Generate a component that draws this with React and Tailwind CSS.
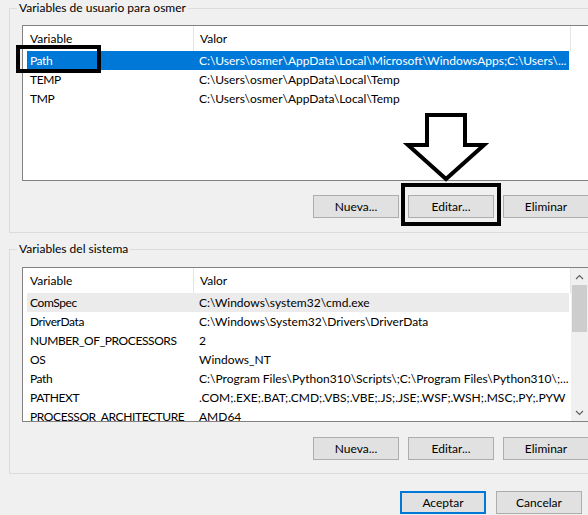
import React from 'react';

const userVars = [
  { name: 'Path', value: 'C:\\Users\\osmer\\AppData\\Local\\Microsoft\\WindowsApps;C:\\Users\\...', selected: true },
  { name: 'TEMP', value: 'C:\\Users\\osmer\\AppData\\Local\\Temp' },
  { name: 'TMP', value: 'C:\\Users\\osmer\\AppData\\Local\\Temp' },
];

const systemVars = [
  { name: 'ComSpec', value: 'C:\\Windows\\system32\\cmd.exe', inactive: true },
  { name: 'DriverData', value: 'C:\\Windows\\System32\\Drivers\\DriverData' },
  { name: 'NUMBER_OF_PROCESSORS', value: '2' },
  { name: 'OS', value: 'Windows_NT' },
  { name: 'Path', value: 'C:\\Program Files\\Python310\\Scripts\\;C:\\Program Files\\Python310\\;...' },
  { name: 'PATHEXT', value: '.COM;.EXE;.BAT;.CMD;.VBS;.VBE;.JS;.JSE;.WSF;.WSH;.MSC;.PY;.PYW' },
  { name: 'PROCESSOR_ARCHITECTURE', value: 'AMD64' },
];

function GroupBox({ title, className, children }) {
  return (
    <div className={`relative w-[592px] border border-[#dcdcdc] pl-[12px] ${className}`}>
      <div className="absolute -top-[9px] left-[7px] bg-[#f0f0f0] px-[2px] leading-[16px] text-black">{title}</div>
      {children}
    </div>
  );
}

function Row({ v }) {
  const bg = v.selected ? 'bg-[#0078d7] text-white' : v.inactive ? 'bg-[#ebebeb] text-black' : 'text-black';
  return (
    <div className={`ml-[4px] flex h-[19px] w-[542px] items-center whitespace-nowrap ${bg}`}>
      <div className="w-[166px] overflow-hidden pl-[3px] tracking-[-0.4px]">{v.name}</div>
      <div className="w-[376px] overflow-hidden pl-[6px]">{v.value}</div>
    </div>
  );
}

function ListView({ rows, height, scroll }) {
  return (
    <div className={`flex w-[567px] border border-[#828282] bg-white ${height}`}>
      <div className="flex-1 overflow-hidden">
        <div className="flex h-[25px] items-center text-black">
          <div className="h-full w-[170px] pl-[7px] leading-[25px]">Variable</div>
          <div className="h-full w-[1px] bg-[#e5e5e5]" />
          <div className="h-full w-[376px] pl-[6px] leading-[25px]">Valor</div>
          <div className="h-full w-[1px] bg-[#e5e5e5]" />
        </div>
        {rows.map((v, i) => (
          <Row key={i} v={v} />
        ))}
      </div>
      {scroll && (
        <div className="flex w-[17px] flex-col items-center bg-[#f0f0f0]">
          <div className="flex h-[17px] items-center justify-center">
            <svg width="9" height="6" viewBox="0 0 9 6">
              <polyline points="1,5 4.5,1.5 8,5" fill="none" stroke="#606060" strokeWidth="1.2" />
            </svg>
          </div>
          <div className="h-[47px] w-[15px] bg-[#cdcdcd]" />
          <div className="flex-1" />
          <div className="flex h-[17px] items-center justify-center">
            <svg width="9" height="6" viewBox="0 0 9 6">
              <polyline points="1,1 4.5,4.5 8,1" fill="none" stroke="#606060" strokeWidth="1.2" />
            </svg>
          </div>
        </div>
      )}
    </div>
  );
}

function Btn({ children, primary }) {
  return (
    <button
      className={`flex h-[23px] w-[86px] items-center justify-center bg-[#e1e1e1] text-black ${
        primary ? 'border-2 border-[#0078d7]' : 'border border-[#adadad]'
      }`}
    >
      {children}
    </button>
  );
}

export default function App() {
  return (
    <div
      className="relative h-[515px] w-[588px] overflow-hidden bg-[#f0f0f0] text-[12px]"
      style={{ fontFamily: 'Lato, "Noto Sans", sans-serif' }}
    >
      <div className="w-[640px] pl-[9px] pt-[8px]">
        <GroupBox title="Variables de usuario para osmer" className="pb-[14px] pt-[16px]">
          <ListView rows={userVars} height="h-[156px]" />
          <div className="mt-[14px] flex w-[567px] justify-end gap-[9px]">
            <Btn>Nueva...</Btn>
            <Btn>Editar...</Btn>
            <Btn>Eliminar</Btn>
          </div>
        </GroupBox>

        <GroupBox title="Variables del sistema" className="mt-[16px] pb-[13px] pt-[17px]">
          <ListView rows={systemVars} height="h-[155px]" scroll />
          <div className="mt-[15px] flex w-[567px] justify-end gap-[9px]">
            <Btn>Nueva...</Btn>
            <Btn>Editar...</Btn>
            <Btn>Eliminar</Btn>
          </div>
        </GroupBox>

        <div className="mt-[17px] flex w-[573px] justify-end gap-[10px]">
          <Btn primary>Aceptar</Btn>
          <Btn>Cancelar</Btn>
        </div>
      </div>

      {/* annotations drawn over the dialog */}
      <div className="absolute left-[16px] top-[45px] h-[28px] w-[85px] border-4 border-black" />
      <div className="absolute left-[401px] top-[183px] h-[43px] w-[100px] border-4 border-black" />
      <svg className="absolute left-[400px] top-[108px]" width="92" height="80" viewBox="0 0 92 80">
        <polygon
          points="27,7 65,7 65,37 84,37 46,71 8,37 27,37"
          fill="white"
          stroke="black"
          strokeWidth="4"
          strokeLinejoin="miter"
        />
      </svg>
    </div>
  );
}
